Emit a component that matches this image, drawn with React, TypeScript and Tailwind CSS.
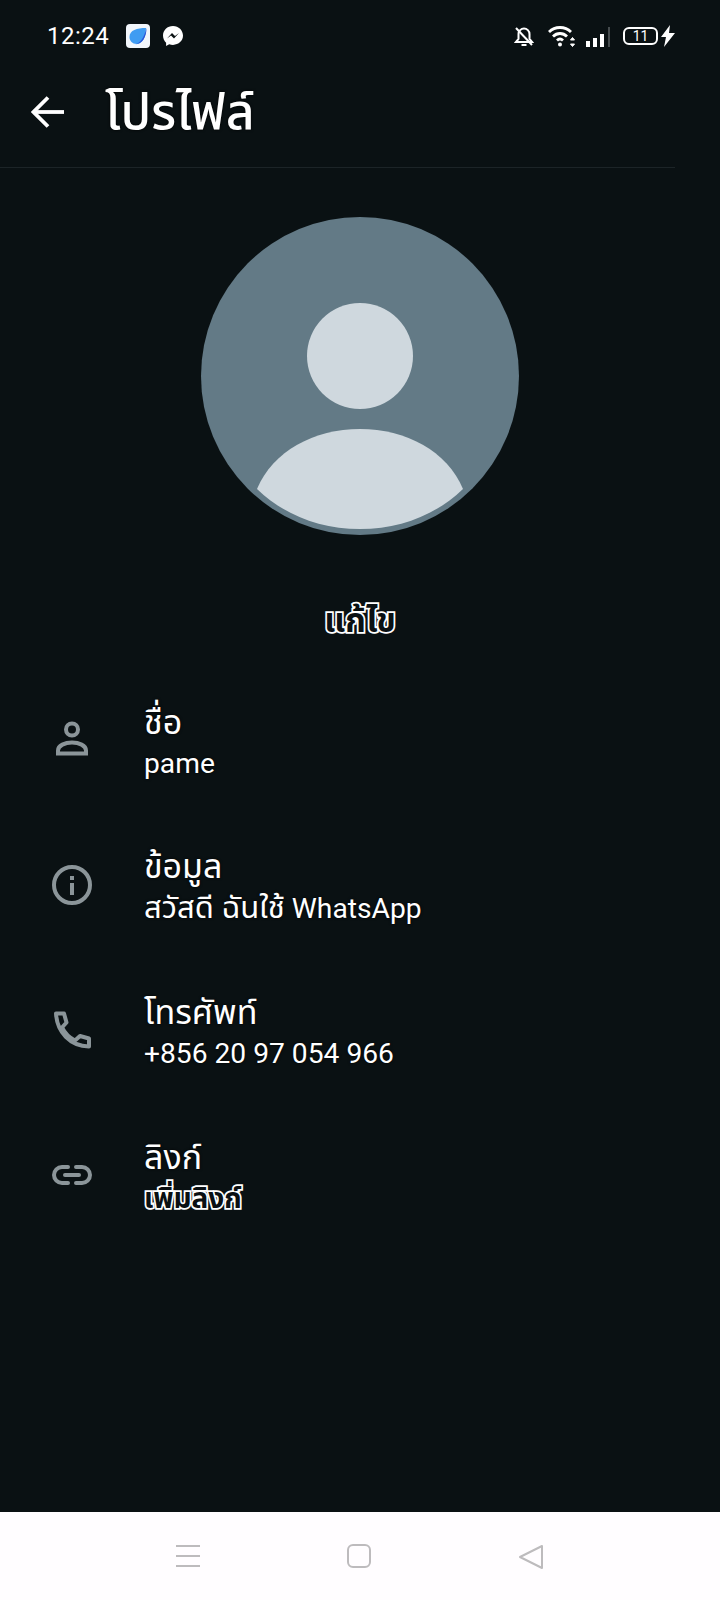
const thai = "font-['Roboto','Noto_Sans_Thai','Noto_Sans','DejaVu_Sans',sans-serif]"

function PersonIcon() {
  return (
    <svg width="40" height="40" viewBox="0 0 40 40" fill="none" stroke="#8b9599" strokeWidth="4">
      <circle cx="20" cy="9.500" r="6" />
      <path d="M6 30.500c0-5 7-8 14-8s14 3 14 8v3H6z" />
    </svg>
  )
}

function InfoIcon() {
  return (
    <svg width="40" height="40" viewBox="0 0 40 40" fill="none">
      <circle cx="20" cy="20" r="18" stroke="#8b9599" strokeWidth="4" />
      <rect x="18" y="18" width="4" height="12" fill="#8b9599" />
      <rect x="18" y="11" width="4" height="4" fill="#8b9599" />
    </svg>
  )
}

function PhoneIcon() {
  return (
    <svg width="40" height="40" viewBox="0 0 40 40" fill="none" stroke="#8b9599" strokeWidth="4" strokeLinejoin="round">
      <path d="M4 3.500h8l2.500 9-4.500 5c3 6 7.500 10.500 13 13l5-4.500 9 2.500v8C18 36 5 22 4 3.500z" />
    </svg>
  )
}

function LinkIcon() {
  return (
    <svg width="40" height="40" viewBox="0 0 40 40" fill="none" stroke="#8b9599" strokeWidth="4" strokeLinecap="round">
      <path d="M16 12h-6a8 8 0 0 0 0 16h6" />
      <path d="M24 12h6a8 8 0 0 1 0 16h-6" />
      <path d="M13 20h14" />
    </svg>
  )
}

function Row({ icon, label, children }: { icon: React.ReactNode; label: string; children: React.ReactNode }) {
  return (
    <div className="flex items-center h-[84px] mb-[61px]">
      <div className="w-[144px] flex justify-center shrink-0">{icon}</div>
      <div className="flex flex-col pt-[5px]">
        <div className="text-[34px] leading-[42px] text-white [text-shadow:0_0_3px_#000]">{label}</div>
        {children}
      </div>
    </div>
  )
}

const valueCls = 'text-[28.200px] leading-[42px] text-white whitespace-nowrap [text-shadow:0_0_3px_#000]'
const outlineCls = 'font-bold text-[#0a1013] [-webkit-text-stroke:3.500px_white] [paint-order:stroke_fill]'

export default function App() {
  return (
    <div className={`w-[720px] h-[1600px] flex flex-col bg-[#0a1113] overflow-hidden ${thai}`}>
      {/* status bar */}
      <div className="h-[72px] flex items-center pl-[47px] pr-[45px]">
        <span className="text-[24px] tracking-[0.5px] text-white w-[79px]">12:24</span>
        <svg width="24" height="24" viewBox="0 0 24 24">
          <rect width="24" height="24" rx="4" fill="#f2f6fb" />
          <path d="M20 4C11 4 3.500 6 3.500 13c0 4 3 7 7 7 6 0 9.500-7 9.500-16z" fill="#3f9cf2" />
          <path d="M20.500 4c0 9-4 16-12 16.500 6-1 9.500-7 12-16.500z" fill="#2a56d8" />
        </svg>
        <svg width="22" height="22" viewBox="0 0 22 22" className="ml-[12px]">
          <path d="M11 1C5.300 1 1 5.100 1 10.600c0 2.900 1.200 5.400 3.100 7.100V21l3.100-1.700c1.200.4 2.500.6 3.800.6 5.700 0 10-4.100 10-9.300S16.700 1 11 1z" fill="#fff" />
          <path d="M5 13.500l5-5.500 3 3 4-3-5 5.500-3-3z" fill="#0a1113" />
        </svg>
        <div className="ml-auto flex items-center">
          <svg width="20" height="22" viewBox="0 0 20 22" fill="none" stroke="#fff" strokeWidth="2" className="mr-[14px]">
            <path d="M2 17h16l-2.500-3V9c0-3-2.500-5.500-5.500-5.500S4.500 6 4.500 9v5z" />
            <path d="M7.500 20h5" />
            <path d="M2 3l16 17" />
          </svg>
          <svg width="28" height="24" viewBox="0 0 28 24" fill="none" stroke="#fff" strokeWidth="2.800" className="mr-[10px]">
            <path d="M1 8c6-6 16-6 22 0" />
            <path d="M5 12.500c4-4 10-4 14 0" />
            <path d="M9 16.500c2-2 4-2 6 0" />
            <circle cx="12" cy="20.500" r="2" fill="#fff" stroke="none" />
            <path d="M24.500 13.500l-2 2.500h4zM24.500 22.500l-2-2.500h4z" fill="#fff" strokeWidth="1" />
          </svg>
          <svg width="24" height="20" viewBox="0 0 24 20" className="mr-[13px] mt-[2px]">
            <rect x="0" y="14" width="4" height="6" fill="#fff" />
            <rect x="7" y="11" width="4" height="9" fill="#fff" />
            <rect x="14" y="7" width="4" height="13" fill="#fff" />
            <rect x="22" y="0" width="2" height="20" fill="#454b4d" />
          </svg>
          <div className="w-[35px] h-[18px] rounded-[6px] border-2 border-white flex items-center justify-center text-[14px] leading-none text-white">11</div>
          <svg width="14" height="22" viewBox="0 0 14 22" className="ml-[3px]">
            <path d="M9 0L0 12h5l-2 10 11-14H8z" fill="#fff" />
          </svg>
        </div>
      </div>

      {/* header */}
      <div className="w-[675px] h-[96px] flex items-center border-b border-[#1c2427] pb-[16px]">
        <svg width="33" height="32" viewBox="0 0 33 32" fill="none" stroke="#fff" strokeWidth="3.800" className="ml-[31px]">
          <path d="M33 16H3" />
          <path d="M17 1.500L2.500 16 17 30.500" />
        </svg>
        <h1 className="ml-[41px] text-[50px] leading-none font-medium text-white [text-shadow:0_0_3px_#000]">โปรไฟล์</h1>
      </div>

      {/* avatar */}
      <div className="mt-[49px] flex justify-center">
        <svg width="318" height="318" viewBox="0 0 318 318">
          <circle cx="159" cy="159" r="159" fill="#637a86" />
          <circle cx="159" cy="139" r="53" fill="#cfd8de" />
          <path d="M56 272c16-38 57-60 103-60s87 22 103 60c-27 26-63 40-103 40s-76-14-103-40z" fill="#cfd8de" />
        </svg>
      </div>

      <div className={`mt-[66px] mb-[57px] text-center text-[33px] leading-[40px] ${outlineCls}`}>แก้ไข</div>

      <div className="flex flex-col">
        <Row icon={<PersonIcon />} label="ชื่อ">
          <div className={valueCls}>pame</div>
        </Row>
        <Row icon={<InfoIcon />} label="ข้อมูล">
          <div className={valueCls}><span className="text-[31px]">สวัสดี ฉันใช้</span> WhatsApp</div>
        </Row>
        <Row icon={<PhoneIcon />} label="โทรศัพท์">
          <div className={valueCls}>+856 20 97 054 966</div>
        </Row>
        <Row icon={<LinkIcon />} label="ลิงก์">
          <div className={`text-[28px] leading-[42px] ${outlineCls}`}>เพิ่มลิงก์</div>
        </Row>
      </div>

      {/* nav bar */}
      <div className="mt-auto h-[88px] bg-[#fffdff] flex items-center">
        <div className="w-[720px] flex justify-between pl-[176px] pr-[176px] pt-[2px]">
          <svg width="24" height="24" viewBox="0 0 24 24" stroke="#bdbbbd" strokeWidth="2">
            <path d="M0 2h24M0 12h24M0 22h24" />
          </svg>
          <svg width="24" height="24" viewBox="0 0 24 24" fill="none" stroke="#bdbbbd" strokeWidth="2">
            <rect x="1" y="1" width="22" height="22" rx="5" />
          </svg>
          <svg width="26" height="26" viewBox="0 0 26 26" fill="none" stroke="#bdbbbd" strokeWidth="2" strokeLinejoin="round">
            <path d="M24 2v22L2 13z" />
          </svg>
        </div>
      </div>
    </div>
  )
}
